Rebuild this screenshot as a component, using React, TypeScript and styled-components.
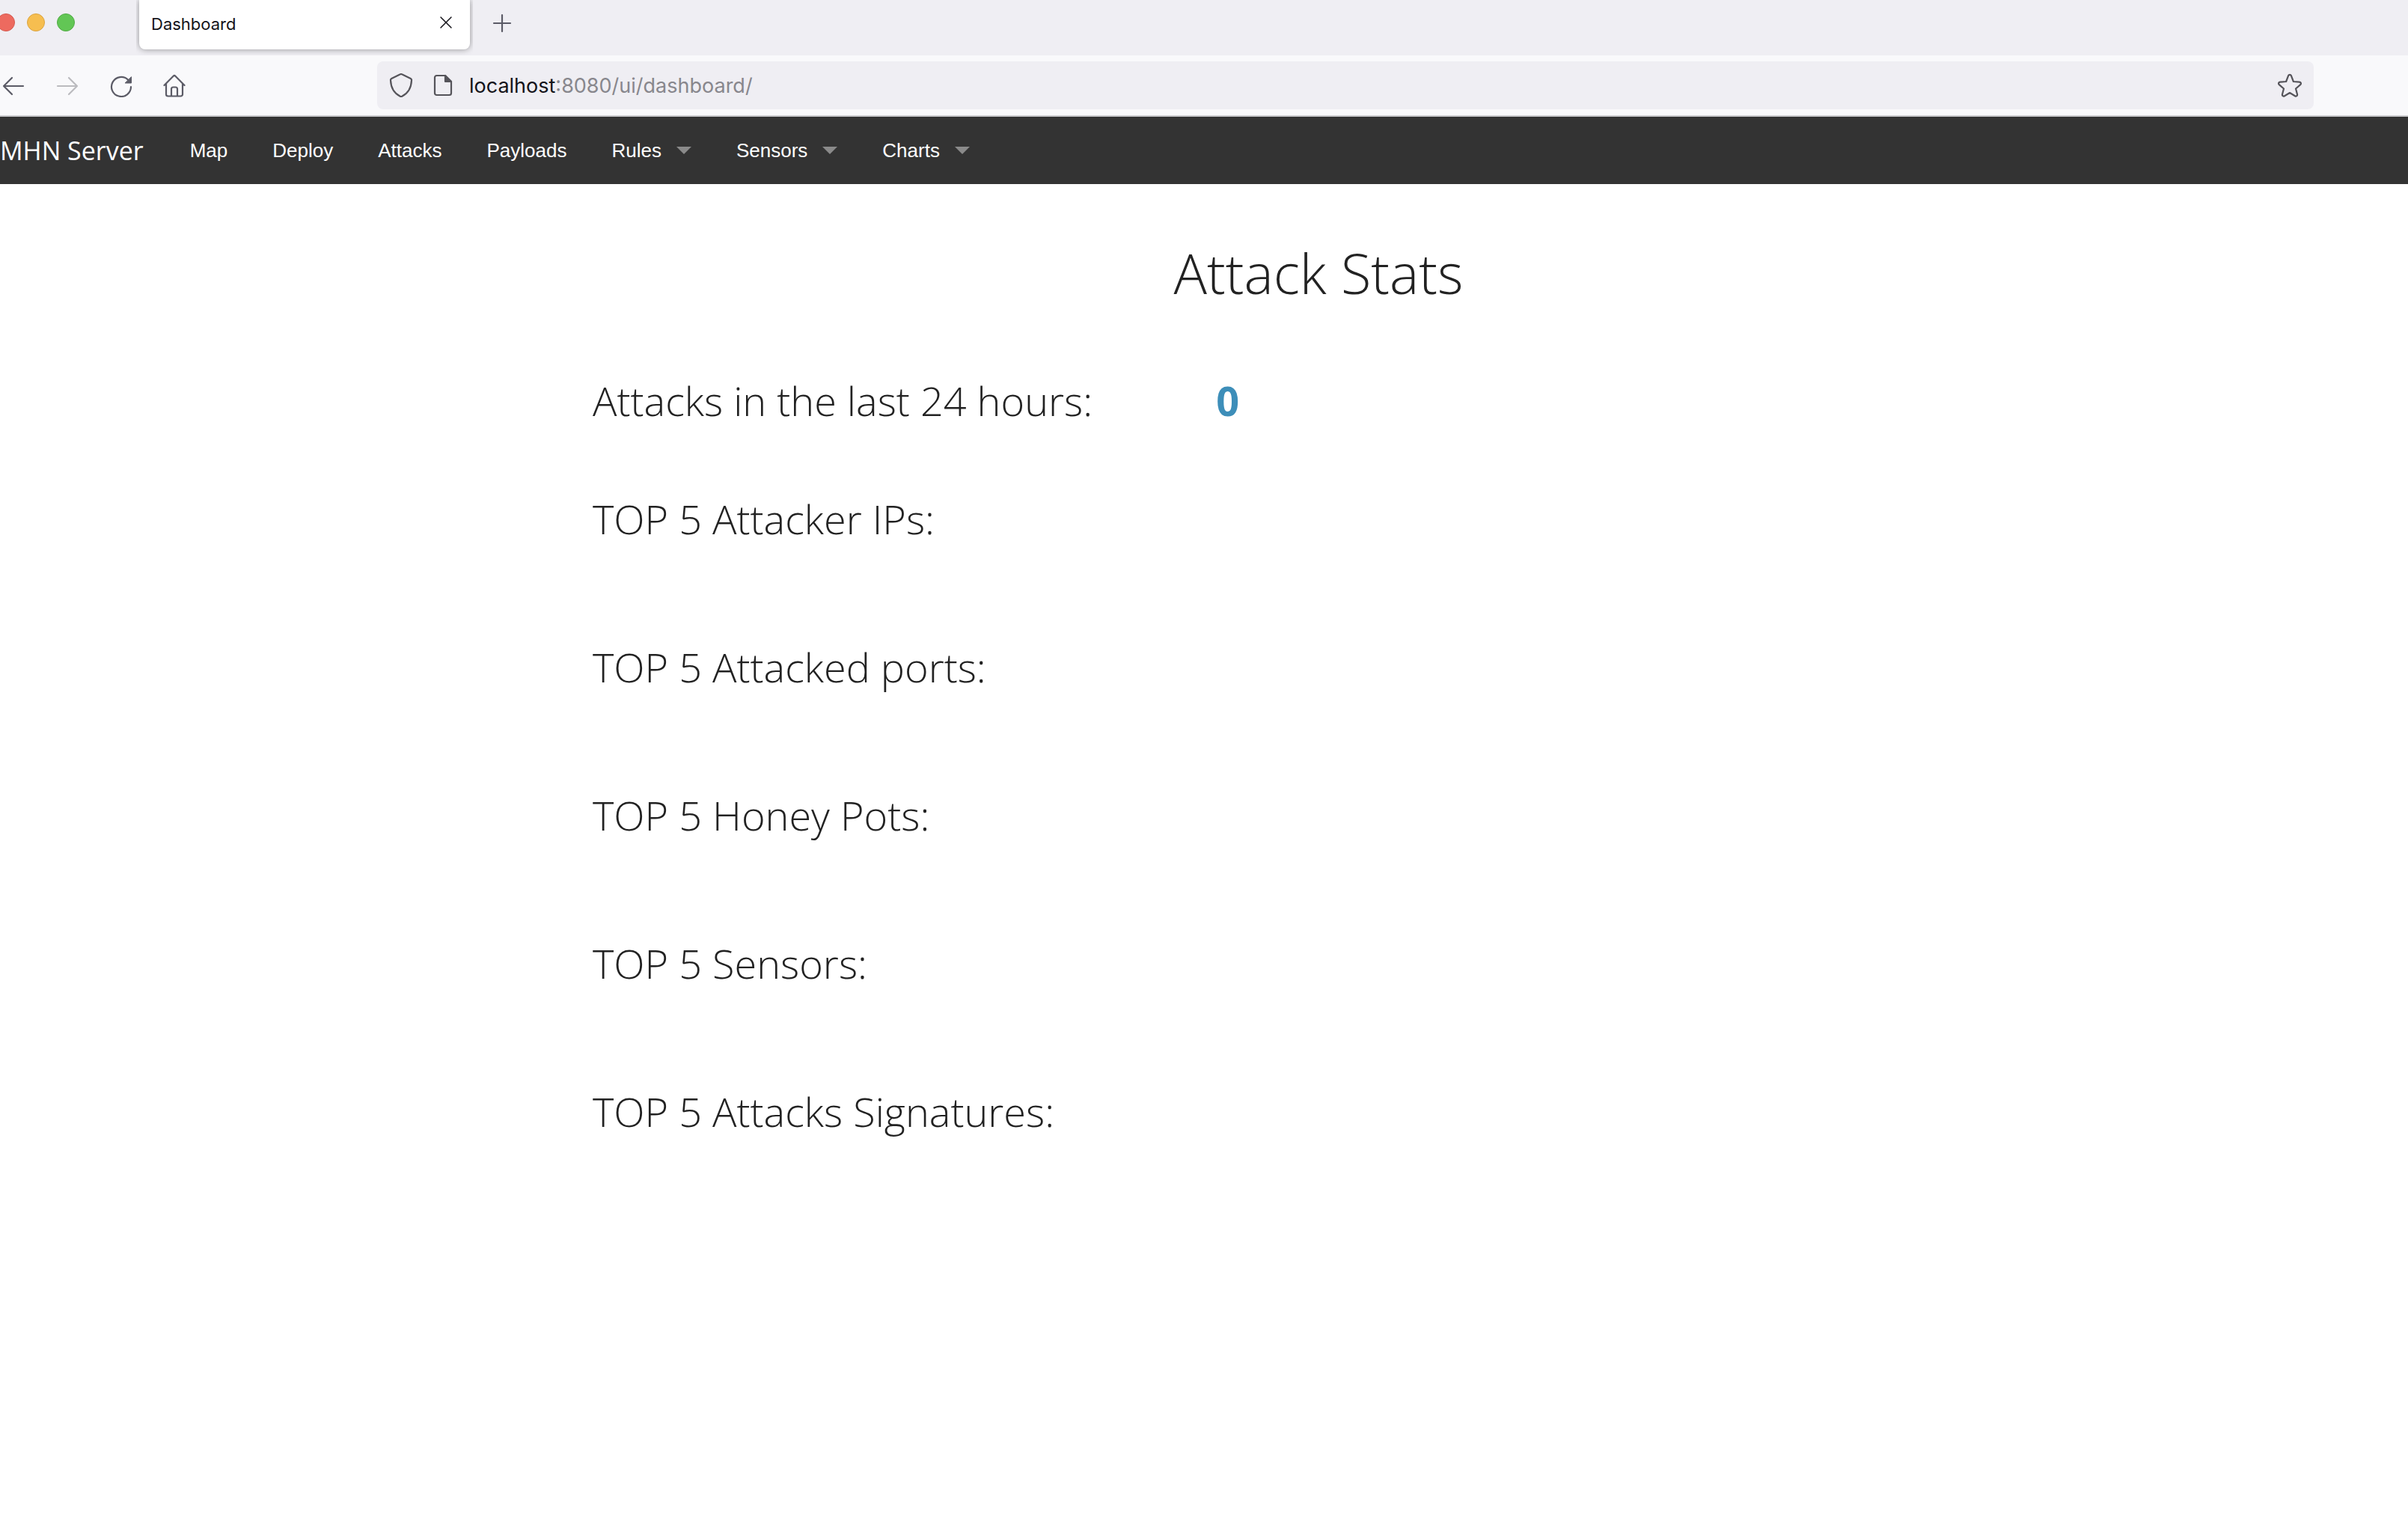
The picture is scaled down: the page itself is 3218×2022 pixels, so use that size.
import React from 'react';
import styled, { createGlobalStyle } from 'styled-components';

const GlobalStyle = createGlobalStyle`
  *, *::before, *::after { box-sizing: border-box; }
  body { margin: 0; background: #fff; color: #222; }
  body, button, input { font-family: Inter, "Liberation Sans", sans-serif; }
`;

const TabStrip = styled.div`
  display: flex;
  align-items: flex-start;
  height: 74px;
  background: #efeef3;
`;

const WindowControls = styled.div`
  display: flex;
  align-items: center;
  gap: 16px;
  height: 60px;
  margin-left: -4px;
  margin-right: 86px;
`;

const WindowDot = styled.button<{ $fill: string; $edge: string }>`
  width: 24px;
  height: 24px;
  padding: 0;
  border: 1px solid ${(p) => p.$edge};
  border-radius: 50%;
  background: ${(p) => p.$fill};
`;

const Tab = styled.div`
  display: flex;
  align-items: flex-start;
  justify-content: space-between;
  width: 442px;
  height: 66px;
  padding: 0 16px;
  border-radius: 0 0 8px 8px;
  background: #fff;
  box-shadow: 0 0 8px rgba(0, 0, 0, 0.4);
  clip-path: inset(0 -4px -8px -4px);
`;

const TabTitle = styled.span`
  font-size: 22px;
  line-height: 64px;
  color: #15141a;
`;

const IconButton = styled.button<{ $tone?: string; $height?: number }>`
  display: flex;
  flex: none;
  align-items: center;
  justify-content: center;
  width: 32px;
  height: ${(p) => p.$height ?? 32}px;
  padding: 0;
  border: 0;
  background: none;
  color: ${(p) => p.$tone ?? '#5b5b66'};
`;

const NewTab = styled.div`
  margin-left: 27px;
`;

const Toolbar = styled.div`
  display: flex;
  align-items: center;
  height: 82px;
  padding: 0 126px 0 2px;
  border-bottom: 2px solid #cccccf;
  background: #f9f9fb;
`;

const NavButtons = styled.div`
  display: flex;
  flex: none;
  gap: 40px;
  margin-right: 254px;
`;

const AddressBar = styled.form`
  display: flex;
  flex: 1;
  align-items: center;
  height: 64px;
  padding: 0 16px;
  border-radius: 8px;
  background: #efeef3;
`;

const AddressIcons = styled.div`
  display: flex;
  gap: 24px;
  margin-right: 19px;
`;

const AddressField = styled.div`
  display: flex;
  flex: 1;
  align-items: center;
  padding-top: 2px;
`;

const Host = styled.label`
  font-size: 27px;
  line-height: 36px;
  color: #15141a;
`;

const AddressInput = styled.input`
  flex: 1;
  min-width: 0;
  height: 36px;
  padding: 0;
  border: 0;
  outline: 0;
  background: none;
  font-size: 27px;
  line-height: 36px;
  color: #88878d;
`;

const TopBar = styled.nav`
  display: flex;
  align-items: center;
  height: 90px;
  background: #333;
`;

const Brand = styled.a`
  padding-right: 32px;
  font-family: "Open Sans", sans-serif;
  font-size: 34px;
  line-height: 92px;
  color: #fff;
  text-decoration: none;
`;

const Menu = styled.ul`
  display: flex;
  margin: 0;
  padding: 0;
  list-style: none;
`;

const MenuLink = styled.a`
  display: flex;
  align-items: center;
  gap: 20px;
  padding: 0 30px;
  font-family: "Liberation Sans", Arial, sans-serif;
  font-size: 26px;
  line-height: 92px;
  color: #fff;
  text-decoration: none;
`;

const Caret = styled.span`
  border: 10px solid transparent;
  border-top-color: #8a8a8a;
  border-bottom-width: 0;
`;

const Page = styled.main`
  padding: 67px 0 0 306px;
`;

const Content = styled.div`
  max-width: 2000px;
  margin: 0 auto;
`;

const Title = styled.h1`
  margin: 0 0 80px;
  font-family: "Open Sans", sans-serif;
  font-size: 74px;
  font-weight: 300;
  line-height: 104px;
  text-align: center;
`;

const StatRow = styled.section<{ $gap: number }>`
  display: grid;
  grid-template-columns: 5fr 7fr;
  margin-bottom: ${(p) => p.$gap}px;
`;

const StatLabel = styled.h2`
  margin: 0;
  padding: 0 30px;
  font-family: "Open Sans", sans-serif;
  font-size: 54px;
  font-weight: 300;
  line-height: 76px;
  white-space: nowrap;
`;

const StatValue = styled.strong`
  padding: 0 30px;
  font-family: "Open Sans", sans-serif;
  font-size: 54px;
  font-weight: 700;
  line-height: 76px;
  color: #3d8eb9;
`;

function Icon({ children }: { children: React.ReactNode }) {
  return (
    <svg
      width="32"
      height="32"
      viewBox="0 0 32 32"
      fill="none"
      stroke="currentColor"
      strokeWidth="2.2"
      strokeLinecap="round"
      strokeLinejoin="round"
      aria-hidden="true"
    >
      {children}
    </svg>
  );
}

const menu = [
  { label: 'Map' },
  { label: 'Deploy' },
  { label: 'Attacks' },
  { label: 'Payloads' },
  { label: 'Rules', dropdown: true },
  { label: 'Sensors', dropdown: true },
  { label: 'Charts', dropdown: true },
];

const stats = [
  { label: 'Attacks in the last 24 hours:', value: '0' },
  { label: 'TOP 5 Attacker IPs:' },
  { label: 'TOP 5 Attacked ports:' },
  { label: 'TOP 5 Honey Pots:' },
  { label: 'TOP 5 Sensors:' },
  { label: 'TOP 5 Attacks Signatures:' },
];

export default function App() {
  return (
    <>
      <GlobalStyle />
      <header>
        <TabStrip>
          <WindowControls>
            <WindowDot aria-label="Close window" $fill="#ed6a5f" $edge="#d65a50" />
            <WindowDot aria-label="Minimize window" $fill="#f6be50" $edge="#dba43f" />
            <WindowDot aria-label="Zoom window" $fill="#62c655" $edge="#51ab45" />
          </WindowControls>
          <Tab>
            <TabTitle>Dashboard</TabTitle>
            <IconButton aria-label="Close tab" $tone="#15141a" $height={60}>
              <Icon>
                <path d="M9 9l14 14M23 9L9 23" strokeWidth="1.5" />
              </Icon>
            </IconButton>
          </Tab>
          <NewTab>
            <IconButton aria-label="New tab" $height={62}>
              <Icon>
                <path d="M16 5v22M5 16h22" />
              </Icon>
            </IconButton>
          </NewTab>
        </TabStrip>
        <Toolbar>
          <NavButtons>
            <IconButton aria-label="Back">
              <Icon>
                <path d="M29 17H3M14 6L3 17l11 11" />
              </Icon>
            </IconButton>
            <IconButton aria-label="Forward" $tone="#bbbbbf">
              <Icon>
                <path d="M3 17h26M18 6l11 11-11 11" />
              </Icon>
            </IconButton>
            <IconButton aria-label="Reload">
              <Icon>
                <path d="M29 18a13 13 0 1 1-4-9.4" />
                <path d="M29.500 5v8h-8z" fill="currentColor" strokeWidth="1" />
              </Icon>
            </IconButton>
            <IconButton aria-label="Home">
              <Icon>
                <path d="M1.500 16L13.600 3.700a2 2 0 0 1 2.800 0L28.500 16M4 14v14a2.500 2.500 0 0 0 2.500 2.500h17A2.500 2.500 0 0 0 26 28V14" />
                <path d="M11 30v-9a2.500 2.500 0 0 1 2.500-2.500h3a2.500 2.500 0 0 1 2.500 2.500v9" />
              </Icon>
            </IconButton>
          </NavButtons>
          <AddressBar onSubmit={(e) => e.preventDefault()}>
            <AddressIcons>
              <IconButton type="button" aria-label="Tracking protection" $tone="#55545a">
                <Icon>
                  <path d="M14.900 1.300a2.200 2.200 0 0 1 2.200 0L28.800 7c1 .5 1.300 1.200 1.200 2.200C29.600 20 25.500 26.500 17.200 30.700a2.500 2.500 0 0 1-2.400 0C6.500 26.500 2.400 20 2 9.200 1.900 8.200 2.200 7.500 3.200 7z" />
                </Icon>
              </IconButton>
              <IconButton type="button" aria-label="Site information" $tone="#55545a">
                <Icon>
                  <path d="M7.500 3H19l8 8v15.500a2.500 2.500 0 0 1-2.500 2.500h-17A2.500 2.500 0 0 1 5 26.500v-21A2.500 2.500 0 0 1 7.500 3z" />
                  <path d="M19 3v8h8z" fill="currentColor" />
                </Icon>
              </IconButton>
            </AddressIcons>
            <AddressField>
              <Host htmlFor="address">localhost</Host>
              <AddressInput id="address" defaultValue=":8080/ui/dashboard/" />
            </AddressField>
            <IconButton type="button" aria-label="Bookmark" $tone="#55545a">
              <Icon>
                <path d="M14 3.300c.8-1.800 3.200-1.800 4 0L20.900 11l8 .6c2 .2 2.700 2.200 1.300 3.500L24 20.500l2 7.500c.4 2-1.400 3.200-3 2.200L16 26l-7 4.200c-1.600 1-3.400-.2-3-2.200l2-7.500-6.200-5.400C.4 13.800 1.100 11.800 3.100 11.600l8-.6z" />
              </Icon>
            </IconButton>
          </AddressBar>
        </Toolbar>
      </header>
      <TopBar>
        <Brand href="#home">MHN Server</Brand>
        <Menu>
          {menu.map((item) => (
            <li key={item.label}>
              <MenuLink href={`#${item.label.toLowerCase()}`}>
                {item.label}
                {item.dropdown && <Caret />}
              </MenuLink>
            </li>
          ))}
        </Menu>
      </TopBar>
      <Page>
        <Content>
          <Title>Attack Stats</Title>
          {stats.map((stat) => (
            <StatRow key={stat.label} $gap={stat.value ? 82 : 122}>
              <StatLabel>{stat.label}</StatLabel>
              {stat.value && <StatValue>{stat.value}</StatValue>}
            </StatRow>
          ))}
        </Content>
      </Page>
    </>
  );
}
